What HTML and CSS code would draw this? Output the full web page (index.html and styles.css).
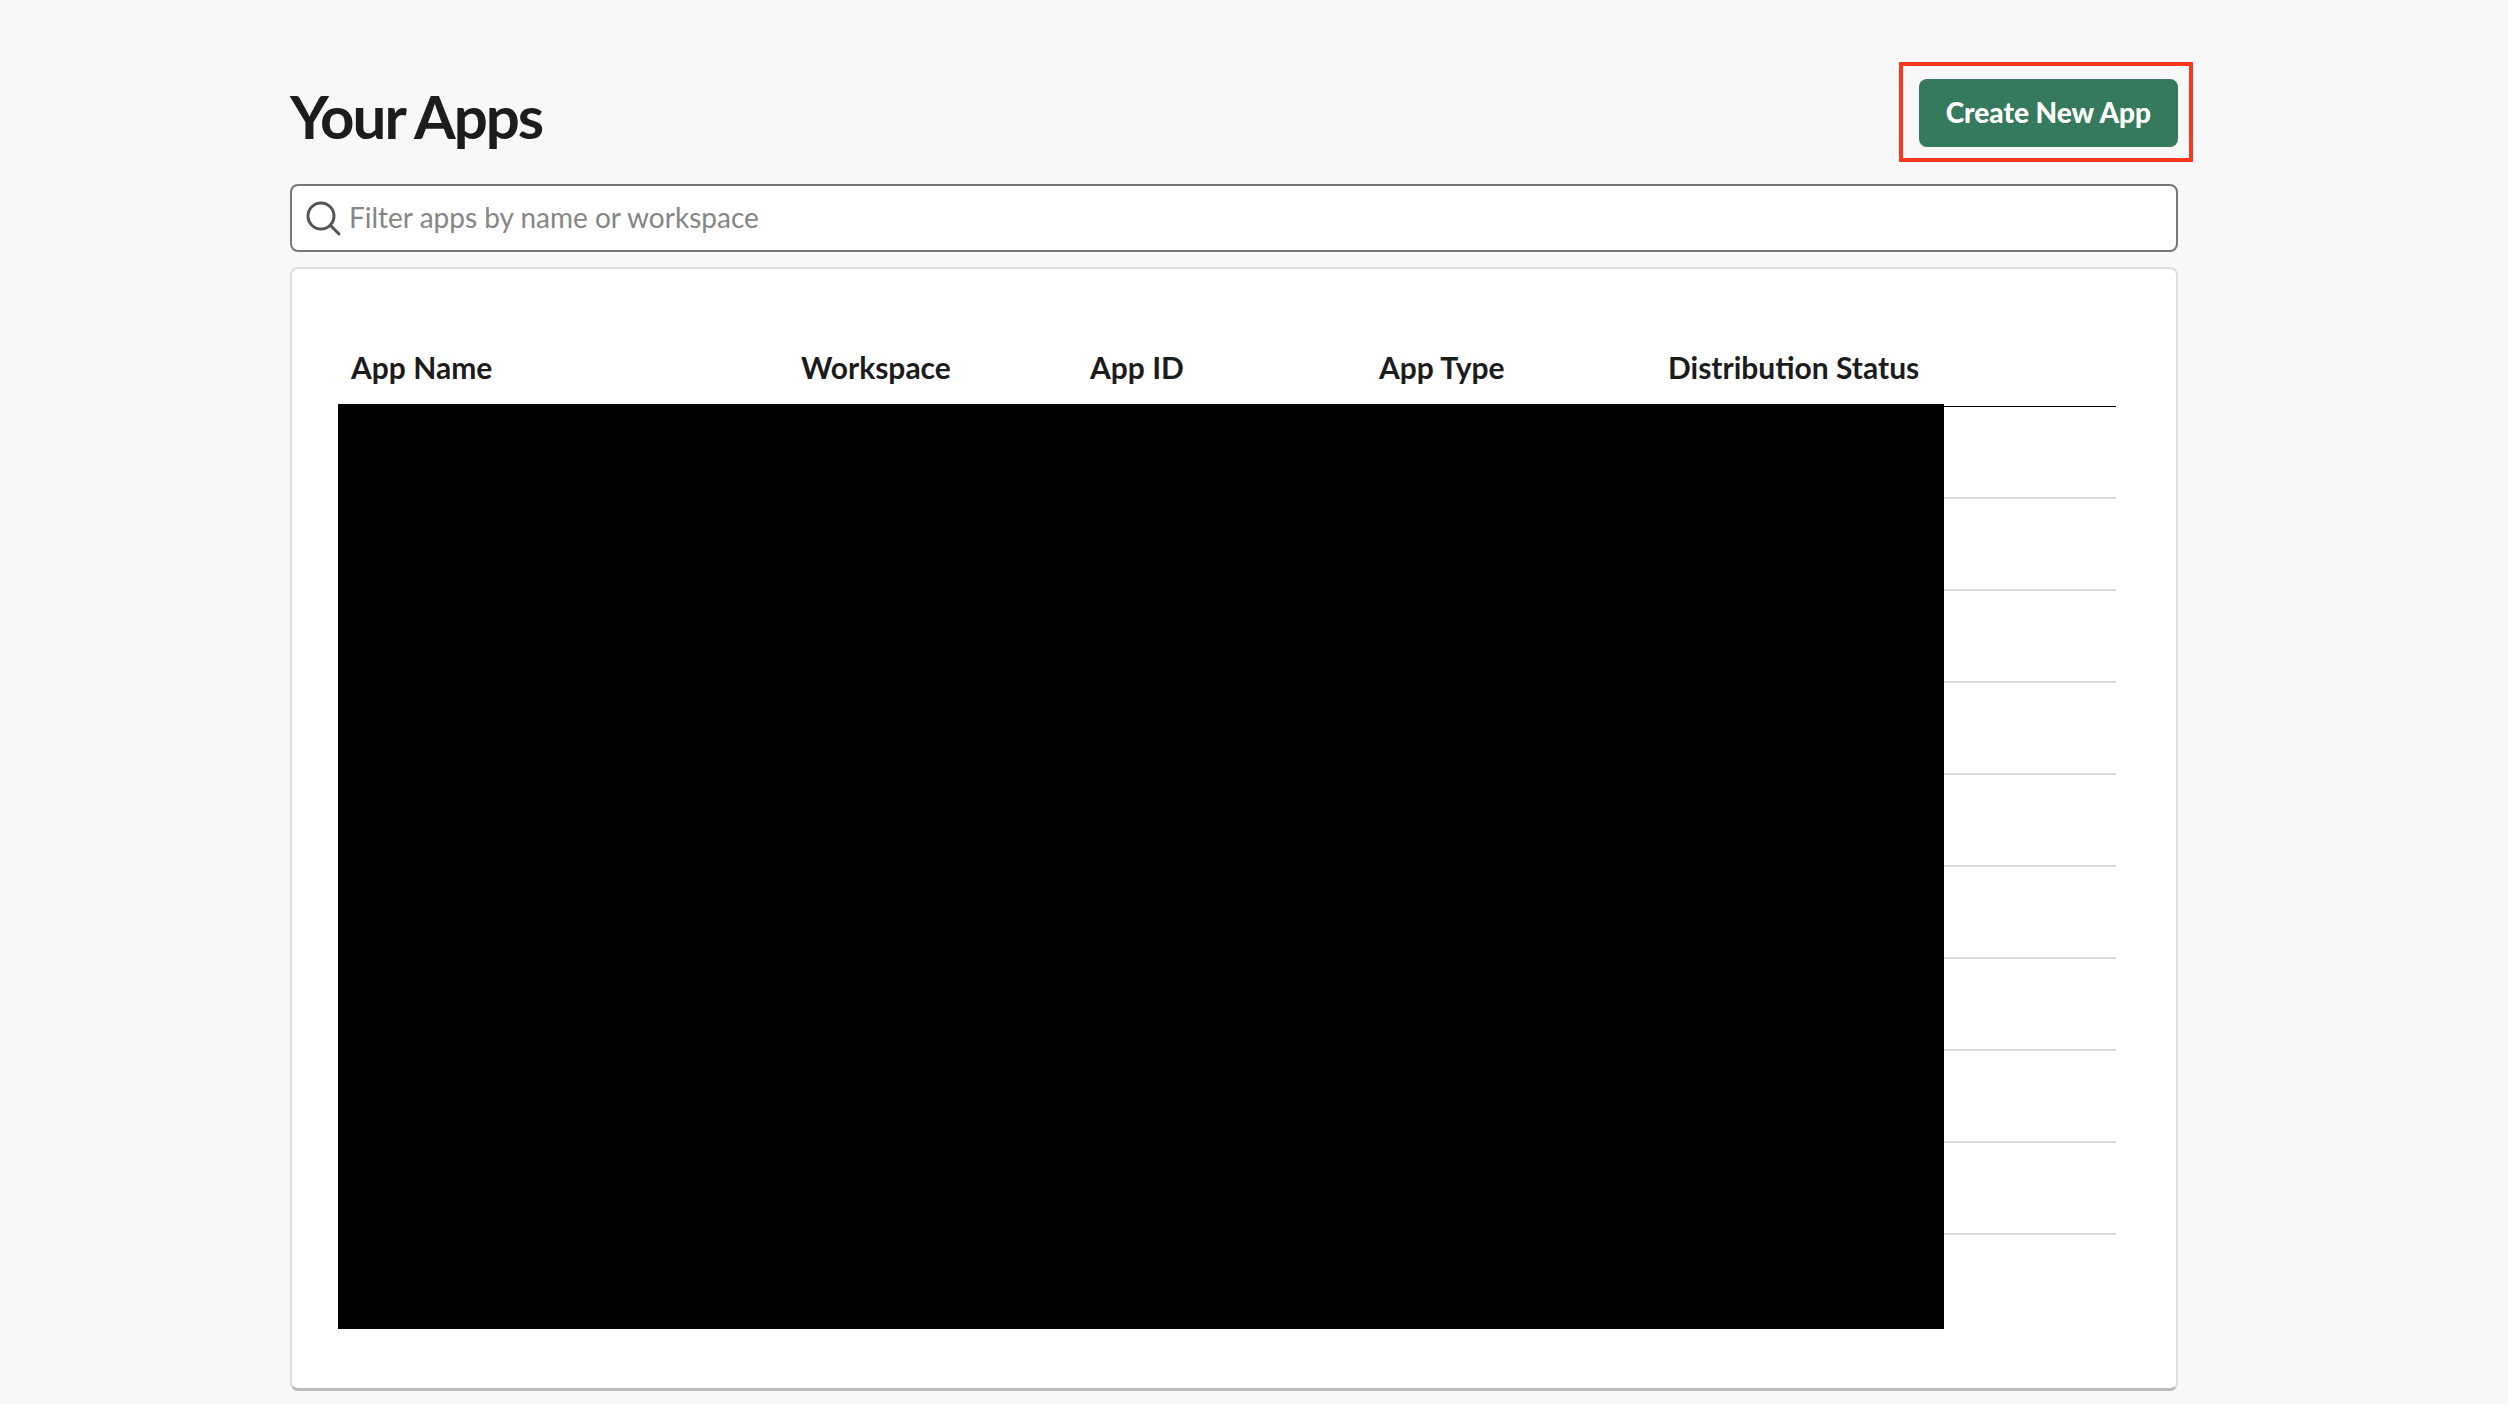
FILE: index.html
```html
<!DOCTYPE html>
<html lang="en">

<head>
    <meta charset="UTF-8">
    <meta name="viewport" content="width=device-width, initial-scale=1.0">
    <title>Your Apps</title>
    <link rel="stylesheet" href="styles.css">
</head>

<body>

    <main class="page">

        <header class="page-header">
            <h1>Your Apps</h1>
            <div class="highlight">
                <button class="btn" type="button">Create New App</button>
            </div>
        </header>

        <label class="search">
            <svg class="search-icon" viewBox="0 0 36 36" aria-hidden="true">
                <circle cx="15" cy="16" r="13" />
                <path d="M24.5 25.5 L33 34" />
            </svg>
            <input type="search" aria-label="Filter apps" placeholder="Filter apps by name or workspace">
        </label>

        <section class="card">
            <div class="table-wrap">
                <table class="apps">
                    <thead>
                        <tr>
                            <th class="col-name">App Name</th>
                            <th class="col">Workspace</th>
                            <th class="col">App ID</th>
                            <th class="col">App Type</th>
                            <th>Distribution Status</th>
                        </tr>
                    </thead>
                    <tbody>
                        <tr><td></td><td></td><td></td><td></td><td></td></tr>
                        <tr><td></td><td></td><td></td><td></td><td></td></tr>
                        <tr><td></td><td></td><td></td><td></td><td></td></tr>
                        <tr><td></td><td></td><td></td><td></td><td></td></tr>
                        <tr><td></td><td></td><td></td><td></td><td></td></tr>
                        <tr><td></td><td></td><td></td><td></td><td></td></tr>
                        <tr><td></td><td></td><td></td><td></td><td></td></tr>
                        <tr><td></td><td></td><td></td><td></td><td></td></tr>
                        <tr><td></td><td></td><td></td><td></td><td></td></tr>
                        <tr><td></td><td></td><td></td><td></td><td></td></tr>
                    </tbody>
                </table>
                <div class="cover"></div>
            </div>
        </section>

    </main>

</body>
</html>
```

FILE: styles.css
```css
:root {
    --bg:      #f8f8f8;
    --surface: #ffffff;
    --text:    #1d1c1d;
    --muted:   #868686;
    --border:  #dddddd;
    --green:   #357a5c;
    --red:     #fb371e;
}

* {
    box-sizing: border-box;
    margin: 0;
    padding: 0;
}

body {
    background: var(--bg);
    color: var(--text);
    font-family: Lato, sans-serif;
    font-size: 28px;
    padding: 62px 40px 12px 0;
}

.page {
    width: 90%;
    max-width: 1888px;
    margin: 0 auto;
}

/* Header */
.page-header {
    display: flex;
    justify-content: space-between;
    align-items: flex-start;
    margin-bottom: 22px;
}

h1 {
    font-size: 60px;
    font-weight: 700;
    line-height: 72px;
    letter-spacing: -2px;
    padding-top: 18px;
}

/* Frame sticks out past the right edge of the page */
.highlight {
    border: 4px solid var(--red);
    padding: 13px 11px 11px 16px;
    margin-right: -15px;
}

.btn {
    display: block;
    height: 68px;
    padding: 0 27px 2px;
    border: 0;
    border-radius: 8px;
    background: var(--green);
    color: #fff;
    font-family: inherit;
    font-size: 28px;
    font-weight: 900;
    cursor: pointer;
}

/* Search */
.search {
    display: flex;
    align-items: center;
    gap: 7px;
    height: 68px;
    padding: 0 14px;
    border: 2px solid #77777a;
    border-radius: 8px;
    background: var(--surface);
    margin-bottom: 15px;
}

.search-icon {
    width: 36px;
    height: 36px;
    fill: none;
    stroke: #555;
    stroke-width: 3;
    stroke-linecap: round;
}

.search input {
    flex: 1;
    padding-bottom: 2px;
    border: 0;
    outline: 0;
    background: transparent;
    font: inherit;
    color: var(--text);
}

.search input::placeholder {
    color: var(--muted);
}

/* Apps table */
.card {
    background: var(--surface);
    border: 2px solid var(--border);
    border-bottom: 3px solid #bbb;
    border-radius: 8px;
    padding: 64px 60px 62px 46px;
}

.table-wrap {
    position: relative;
}

.apps {
    width: 100%;
    table-layout: fixed;
    border-collapse: collapse;
}

.apps th {
    height: 73px;
    padding: 0 13px 4px;
    border-bottom: 1px solid #000;
    font-size: 30px;
    font-weight: 700;
    text-align: left;
}

.apps td {
    height: 92px;
    border-bottom: 2px solid var(--border);
}

.apps tr:last-child td {
    border-bottom: 0;
}

.col-name {
    width: 450px;
}

.col {
    width: 289px;
}

.cover {
    position: absolute;
    top: 71px;
    bottom: -3px;
    left: 0;
    width: 1606px;
    background: #000;
}
```
